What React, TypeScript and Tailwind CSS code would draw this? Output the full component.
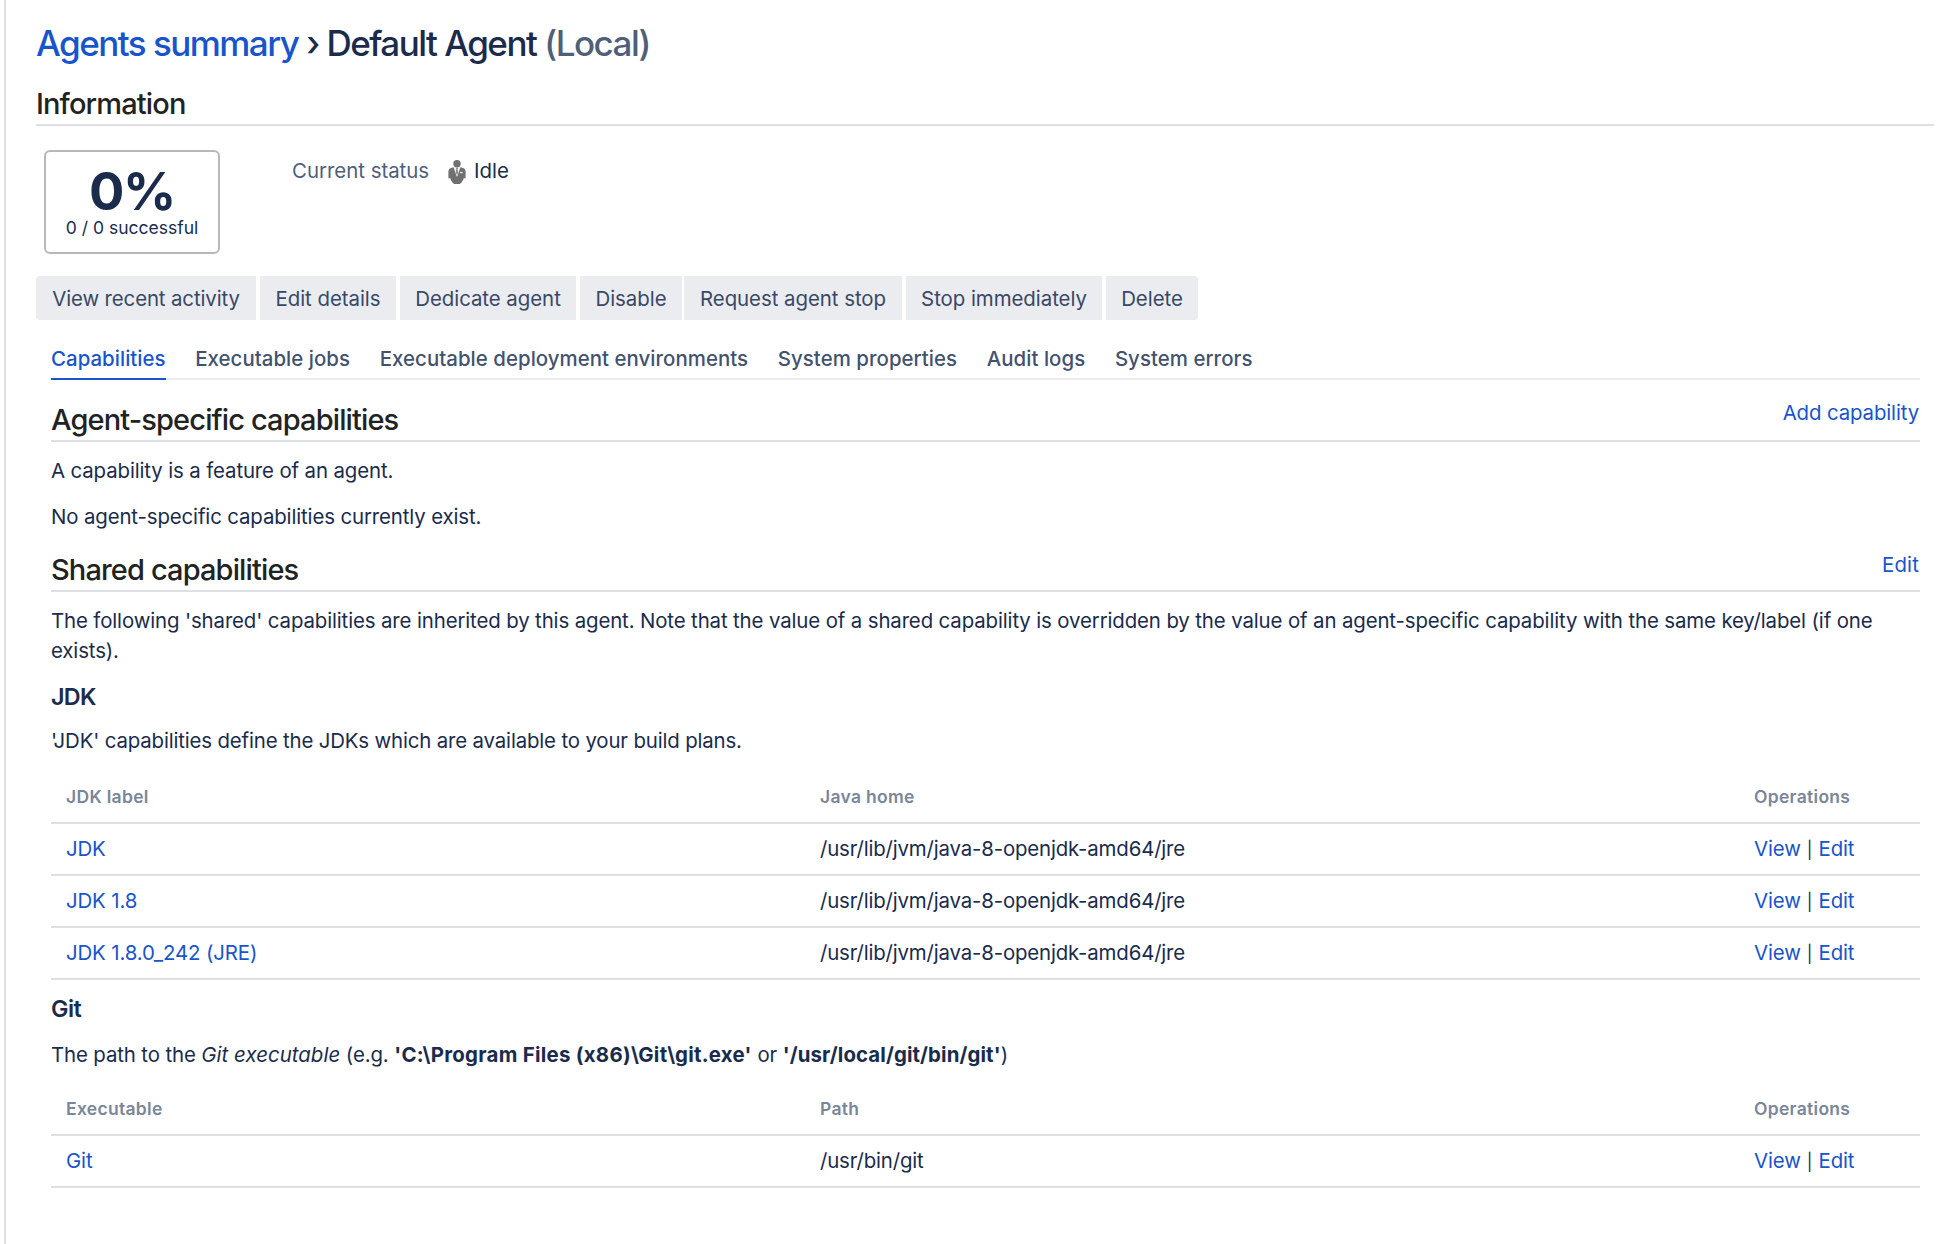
import type { ReactNode } from "react";

const link = "text-[#1854cb] hover:underline";

function Link({ children }: { children: ReactNode }) {
  return <a href="#" className={link}>{children}</a>;
}

function SectionTitle({ children, action }: { children: ReactNode; action?: ReactNode }) {
  return (
    <div className="flex h-10 items-start justify-between border-b-2 border-[#dfe0e7]">
      <h2 className="text-[29px] leading-[35px] font-medium tracking-[-0.87px] text-[#222222]">{children}</h2>
      {action}
    </div>
  );
}

function AgentIcon() {
  return (
    <svg className="h-6 w-[18px]" viewBox="0 0 18 24" fill="#707070">
      <circle cx="9" cy="3.7" r="3.7" />
      <path d="M4.600 7.600 H13.400 C16 7.900 17.600 9.200 17.600 11.600 V18.200 H15.800 C15 20.600 13.600 22.800 11.800 24 H6.200 C4.400 22.800 3 20.600 2.200 18.200 H.4 V11.600 C.4 9.200 2 7.900 4.600 7.600 Z" />
      <path d="M5.600 7.200 H12.400 L9.300 16.400 H8.700 Z" fill="#f4f4f4" />
      <path d="M7.900 7.400 H10.100 L9.700 9.200 L10.200 12.400 L9 15.200 L7.800 12.400 L8.300 9.200 Z" fill="#8c8c8c" />
      <path d="M12 12.600 H14.600" stroke="#e2e2e2" strokeWidth="1.400" />
    </svg>
  );
}

function CapabilityTable({ head, rows }: { head: string[]; rows: string[][] }) {
  const cell = "h-[52px] border-b-2 border-[#dfe0e7] px-[15px] py-0";
  return (
    <table className="w-full table-fixed border-separate border-spacing-0 text-left">
      <colgroup>
        <col className="w-[754px]" />
        <col className="w-[934px]" />
        <col />
      </colgroup>
      <thead>
        <tr className="text-[17.5px] leading-6 tracking-[0.3px] text-[#7a8699]">
          {head.map((h) => (
            <th key={h} className={`${cell} font-semibold`}>{h}</th>
          ))}
        </tr>
      </thead>
      <tbody>
        {rows.map(([name, path]) => (
          <tr key={name}>
            <td className={cell}><Link>{name}</Link></td>
            <td className={`${cell} tracking-[-0.16px]`}>{path}</td>
            <td className={cell}>
              <Link>View</Link> <span className="px-[0.5px] text-[17px] leading-none">|</span> <Link>Edit</Link>
            </td>
          </tr>
        ))}
      </tbody>
    </table>
  );
}

const actions: [string, string][] = [
  ["View recent activity", "w-[220px] rounded-l-[4px] tracking-[-0.11px]"],
  ["Edit details", "w-[136px]"],
  ["Dedicate agent", "w-[176px]"],
  ["Disable", "w-[102px] -mr-0.5"],
  ["Request agent stop", "w-[218px]"],
  ["Stop immediately", "w-[196px]"],
  ["Delete", "w-[92px] rounded-r-[4px]"],
];

const tabs = [
  "Capabilities",
  "Executable jobs",
  "Executable deployment environments",
  "System properties",
  "Audit logs",
  "System errors",
];

const jre = "/usr/lib/jvm/java-8-openjdk-amd64/jre";

export default function App() {
  return (
    <div className="h-[1244px] overflow-hidden bg-white pl-1 font-['Inter',sans-serif] text-[20.4px] leading-[30px] tracking-[-0.12px] text-[#1a2b4c]">
      <main className="h-full border-l-2 border-[#dfe0e7] pt-[22px] pr-5 pl-[30px]">
        <h1 className="text-[35px] leading-[42px] font-medium tracking-[-1.53px] whitespace-nowrap">
          <Link>Agents summary</Link> › Default Agent{" "}
          <span className="text-[#505f79]">(Local)</span>
        </h1>

        <div className="mt-[22px]">
          <SectionTitle>Information</SectionTitle>
        </div>

        <section className="mt-6 ml-2 flex h-[104px]">
          <div className="flex w-44 flex-col items-center rounded-[6px] border-2 border-[#b8b8b8] pt-3">
            <strong className="text-[52.5px] leading-[54px] font-bold tracking-[-1.4px]">0%</strong>
            <span className="text-[17.5px] leading-5 tracking-normal">0 / 0 successful</span>
          </div>
          <dl className="mt-1.5 ml-[72px] flex h-[30px] tracking-normal">
            <dt className="w-[155px] text-[#505f79]">Current status</dt>
            <dd className="flex gap-2">
              <span className="mt-1 ml-px flex h-6"><AgentIcon /></span>
              Idle
            </dd>
          </dl>
        </section>

        <div className="mt-[22px] flex h-11 gap-1 tracking-[-0.03px] text-[#384866]">
          {actions.map(([label, shape]) => (
            <button key={label} className={`${shape} bg-[#ebecf0] pt-px text-center whitespace-nowrap`}>
              {label}
            </button>
          ))}
        </div>

        <div className="mt-6 mr-3.5 ml-[15px]">
          <nav className="flex h-9 gap-[29.7px] border-b-2 border-[#ebecf0] font-medium tracking-[0.05px] text-[#42526e]">
            {tabs.map((tab, i) => (
              <a
                key={tab}
                href="#"
                className={i === 0 ? "h-9 border-b-2 border-[#1854cb] text-[#1854cb]" : "h-9"}
              >
                {tab}
              </a>
            ))}
          </nav>

          <div className="mt-[22px]">
            <SectionTitle action={<span className="-mt-1 mr-px"><Link>Add capability</Link></span>}>
              Agent-specific capabilities
            </SectionTitle>
          </div>
          <p className="mt-3.5">A capability is a feature of an agent.</p>
          <p className="mt-4">No agent-specific capabilities currently exist.</p>

          <div className="mt-5">
            <SectionTitle action={<span className="-mt-0.5 mr-px tracking-[0.15px]"><Link>Edit</Link></span>}>
              Shared capabilities
            </SectionTitle>
          </div>
          <p className="mt-3.5">
            The following 'shared' capabilities are inherited by this agent. Note that the value of a
            shared capability is overridden by the value of an agent-specific capability with the same
            key/label (if one exists).
          </p>

          <h3 className="mt-4 text-[23.3px] font-semibold tracking-[-0.7px]">JDK</h3>
          <p className="mt-3.5 tracking-[-0.15px]">
            'JDK' capabilities define the JDKs which are available to your build plans.
          </p>
          <div className="mt-4">
            <CapabilityTable
              head={["JDK label", "Java home", "Operations"]}
              rows={[["JDK", jre], ["JDK 1.8", jre], ["JDK 1.8.0_242 (JRE)", jre]]}
            />
          </div>

          <h3 className="mt-3.5 text-[23.3px] font-semibold tracking-[-0.5px]">Git</h3>
          <p className="mt-4">
            The path to the <em className="tracking-[0.05px]">Git executable</em> (e.g.{" "}
            <strong className="tracking-[0.28px]">'C:\Program Files (x86)\Git\git.exe'</strong> or{" "}
            <strong className="tracking-[0.1px]">'/usr/local/git/bin/git'</strong>)
          </p>
          <div className="mt-3.5">
            <CapabilityTable
              head={["Executable", "Path", "Operations"]}
              rows={[["Git", "/usr/bin/git"]]}
            />
          </div>
        </div>
      </main>
    </div>
  );
}
